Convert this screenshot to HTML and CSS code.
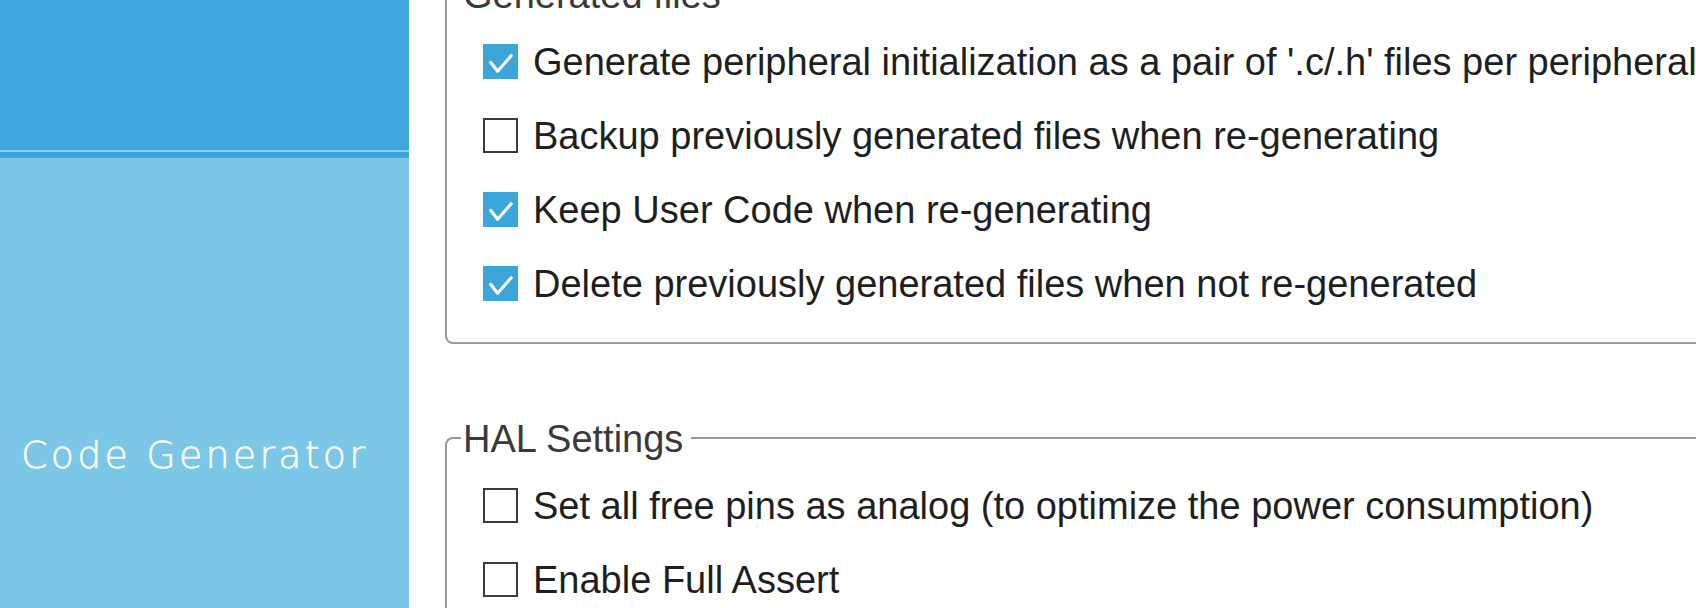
FILE: index.html
```html
<!DOCTYPE html>
<html lang="en">
<head>
<meta charset="utf-8">
<title>Project Manager - Code Generator</title>
<link rel="stylesheet" href="styles.css">
</head>
<body>
<div class="app">
  <nav class="sidebar">
    <div class="tab tab-top"></div>
    <div class="tab-sep"></div>
    <div class="tab tab-active">
      <span class="tab-label">Code Generator</span>
    </div>
  </nav>
  <main class="content">
    <section class="group group-first">
      <div class="group-head">
        <span class="corner"></span>
        <span class="legend">Generated files</span>
        <span class="rule"></span>
      </div>
      <div class="group-body">
        <label class="opt">
          <span class="box checked"><svg viewBox="0 0 36 36" width="35" height="35"><polyline points="8,19 15,28 29,12" fill="none" stroke="#fff" stroke-width="3.2" stroke-linecap="round" stroke-linejoin="round"/></svg></span>
          <span class="opt-text">Generate peripheral initialization as a pair of '.c/.h' files per peripheral</span>
        </label>
        <label class="opt">
          <span class="box"></span>
          <span class="opt-text">Backup previously generated files when re-generating</span>
        </label>
        <label class="opt">
          <span class="box checked"><svg viewBox="0 0 36 36" width="35" height="35"><polyline points="8,19 15,28 29,12" fill="none" stroke="#fff" stroke-width="3.2" stroke-linecap="round" stroke-linejoin="round"/></svg></span>
          <span class="opt-text">Keep User Code when re-generating</span>
        </label>
        <label class="opt">
          <span class="box checked"><svg viewBox="0 0 36 36" width="35" height="35"><polyline points="8,19 15,28 29,12" fill="none" stroke="#fff" stroke-width="3.2" stroke-linecap="round" stroke-linejoin="round"/></svg></span>
          <span class="opt-text">Delete previously generated files when not re-generated</span>
        </label>
      </div>
    </section>

    <section class="group group-hal">
      <div class="group-head">
        <span class="corner"></span>
        <span class="legend">HAL Settings</span>
        <span class="rule"></span>
      </div>
      <div class="group-body">
        <label class="opt">
          <span class="box"></span>
          <span class="opt-text">Set all free pins as analog (to optimize the power consumption)</span>
        </label>
        <label class="opt">
          <span class="box"></span>
          <span class="opt-text">Enable Full Assert</span>
        </label>
      </div>
    </section>
  </main>
</div>
</body>
</html>
```

FILE: styles.css
```css
html, body {
  margin: 0;
  padding: 0;
  background: #ffffff;
}

.app {
  display: flex;
  width: 1696px;
  height: 608px;
  overflow: hidden;
}

/* ---------- sidebar ---------- */
.sidebar {
  width: 409px;
  flex: 0 0 409px;
  display: flex;
  flex-direction: column;
}

.tab-top {
  height: 150px;
  flex: 0 0 150px;
  background: #3ea8dc;
}

.tab-sep {
  height: 6px;
  flex: 0 0 6px;
  border-top: 2px solid #8ccdec;
  background: #3ba5da;
}

.tab-active {
  flex: 1 1 auto;
  background: #7cc6e7;
  padding: 277px 0 0 21px;
}

.tab-label {
  display: block;
  font-family: "DejaVu Sans", "Open Sans", sans-serif;
  font-weight: 200;
  font-size: 38px;
  line-height: 40px;
  letter-spacing: 3.2px;
  color: #ffffff;
  -webkit-text-stroke: 0.5px #ffffff;
  white-space: nowrap;
}

/* ---------- content ---------- */
.content {
  flex: 1 1 auto;
  overflow: hidden;
  padding-left: 36px;
  display: flex;
  flex-direction: column;
  font-family: "Liberation Sans", Arial, sans-serif;
}

.group {
  width: 1400px;
  flex: 0 0 auto;
}

.group-first {
  margin-top: -26px;
}

.group-hal {
  margin-top: 74px;
}

.group-head {
  display: flex;
  height: 42px;
}

.corner {
  width: 14px;
  flex: 0 0 14px;
  margin-top: 19px;
  border-top: 2px solid #9b9b9b;
  border-left: 2px solid #9b9b9b;
  border-top-left-radius: 8px;
}

.legend {
  font-size: 38px;
  line-height: 42px;
  color: #3a3a3a;
  padding: 0 8px 0 2px;
  white-space: nowrap;
}

.rule {
  flex: 1 1 auto;
  margin-top: 19px;
  height: 0;
  border-top: 2px solid #9b9b9b;
}

.group-body {
  border: 2px solid #9b9b9b;
  border-top: none;
  border-bottom-left-radius: 8px;
  border-bottom-right-radius: 8px;
  padding: 8px 0 22px 36px;
}

.opt {
  display: flex;
  align-items: center;
  height: 74px;
  gap: 15px;
}

.box {
  width: 35px;
  height: 35px;
  flex: 0 0 35px;
  box-sizing: border-box;
  border: 2.5px solid #3b3b3b;
  background: #ffffff;
  display: flex;
}

.box.checked {
  border: none;
  background: #3ca6db;
}

.opt-text {
  font-size: 38px;
  line-height: 42px;
  color: #1f1f1f;
  white-space: nowrap;
  padding-top: 2px;
}
```
